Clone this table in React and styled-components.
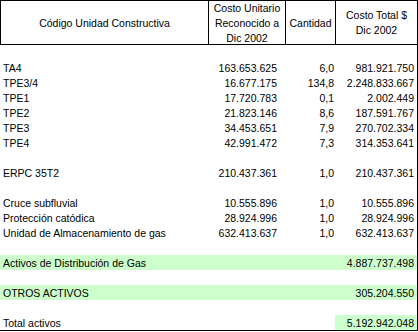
import React from "react";
import styled, { createGlobalStyle } from "styled-components";

const Global = createGlobalStyle`
  html, body { margin: 0; padding: 0; background: #ffffff; }
  body { font-family: "Liberation Sans", Arial, sans-serif; color: #000; }
`;

const Sheet = styled.div`
  width: 418px;
  font-family: "Liberation Sans", Arial, sans-serif;
  font-size: 10.5px;
  color: #000;
`;

const HeaderRow = styled.div`
  display: grid;
  grid-template-columns: 209px 77px 50px 82px;
  height: 45px;
  box-sizing: border-box;
  border-top: 1px solid #000;
  border-bottom: 1px solid #000;
`;

const HeaderCell = styled.div`
  box-sizing: border-box;
  border-right: 1px solid #000;
  border-left: ${(p) => (p.$first ? "1px solid #000" : "none")};
  display: flex;
  align-items: center;
  justify-content: center;
  text-align: center;
  line-height: 15px;
  padding: 1px 1px 0;
  overflow: hidden;
`;

const Row = styled.div`
  display: grid;
  grid-template-columns: 208px 77px 50px 82px;
  width: 418px;
  box-sizing: border-box;
  height: ${(p) => (p.$last ? "16px" : "15px")};
  line-height: 15px;
  border-right: 1px solid #000;
  border-bottom: ${(p) => (p.$last ? "1px solid #000" : "none")};
  background: ${(p) => (p.$green ? "#ccffcc" : "transparent")};
  white-space: nowrap;
`;

const Label = styled.div`
  padding: 1px 0 0 3px;
  line-height: 14px;
  overflow: hidden;
`;

const Num = styled.div`
  text-align: right;
  padding-top: 1px;
  line-height: 14px;
  padding-right: ${(p) => p.$pad}px;
  background: ${(p) => (p.$green ? "#ccffcc" : "transparent")};
`;

const rows = [
  null,
  ["TA4", "163.653.625", "6,0", "981.921.750"],
  ["TPE3/4", "16.677.175", "134,8", "2.248.833.667"],
  ["TPE1", "17.720.783", "0,1", "2.002.449"],
  ["TPE2", "21.823.146", "8,6", "187.591.767"],
  ["TPE3", "34.453.651", "7,9", "270.702.334"],
  ["TPE4", "42.991.472", "7,3", "314.353.641"],
  null,
  ["ERPC 35T2", "210.437.361", "1,0", "210.437.361"],
  null,
  ["Cruce subfluvial", "10.555.896", "1,0", "10.555.896"],
  ["Protección catódica", "28.924.996", "1,0", "28.924.996"],
  ["Unidad de Almacenamiento de gas", "632.413.637", "1,0", "632.413.637"],
  null,
  ["Activos de Distribución de Gas", "", "", "4.887.737.498", "green"],
  null,
  ["OTROS ACTIVOS", "", "", "305.204.550", "green"],
  null,
  ["Total activos", "", "", "5.192.942.048", "total"],
];

export default function App() {
  return (
    <Sheet>
      <Global />
      <HeaderRow>
        <HeaderCell $first>Código Unidad Constructiva</HeaderCell>
        <HeaderCell>
          Costo Unitario
          <br />
          Reconocido a
          <br />
          Dic 2002
        </HeaderCell>
        <HeaderCell>Cantidad</HeaderCell>
        <HeaderCell>
          Costo Total $
          <br />
          Dic 2002
        </HeaderCell>
      </HeaderRow>
      {rows.map((r, i) =>
        r === null ? (
          <Row key={i} />
        ) : (
          <Row key={i} $green={r[4] === "green"} $last={r[4] === "total"}>
            <Label>{r[0]}</Label>
            <Num $pad={8}>{r[1]}</Num>
            <Num $pad={1}>{r[2]}</Num>
            <Num $pad={3} $green={r[4] === "total"}>
              {r[3]}
            </Num>
          </Row>
        )
      )}
    </Sheet>
  );
}
